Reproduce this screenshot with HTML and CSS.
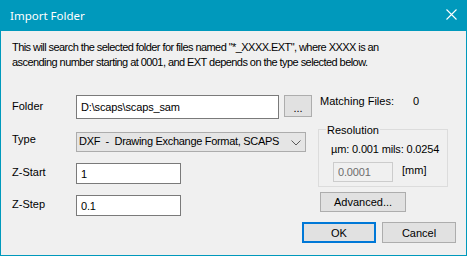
FILE: index.html
```html
<!DOCTYPE html>
<html lang="en">
<head>
  <meta charset="UTF-8" />
  <title>Import Folder</title>
  <link rel="stylesheet" href="styles.css">
</head>
<body>

  <div class="dialog">
    <div class="titlebar">
      <span class="title">Import Folder</span>
      <svg class="close" width="11" height="11" viewBox="0 0 11 11">
        <path d="M0.5 0.5L10.5 10.5M10.5 0.5L0.5 10.5" stroke="#fff" stroke-width="1.1" fill="none"/>
      </svg>
    </div>

    <div class="content">
      <p class="intro">This will search the selected folder for files named "*_XXXX.EXT", where XXXX is an<br>ascending number starting at 0001, and EXT depends on the type selected below.</p>

      <div class="main">
        <div class="fields">
          <div class="row row-folder">
            <label>Folder</label>
            <input class="text folder" type="text" value="D:\scaps\scaps_sam" />
            <button class="btn browse">...</button>
          </div>
          <div class="row row-type">
            <label>Type</label>
            <div class="combo">
              <span>DXF&nbsp; -&nbsp; Drawing Exchange Format, SCAPS</span>
              <svg class="chevron" width="10" height="6" viewBox="0 0 10 6">
                <path d="M0.5 0.5L5 5L9.5 0.5" stroke="#5a5a5a" stroke-width="1" fill="none"/>
              </svg>
            </div>
          </div>
          <div class="row row-z">
            <label>Z-Start</label>
            <input class="text short" type="text" value="1" />
          </div>
          <div class="row row-z">
            <label>Z-Step</label>
            <input class="text short" type="text" value="0.1" />
          </div>
        </div>

        <div class="side">
          <div class="matching">
            <span class="matching-label">Matching Files:</span>
            <span>0</span>
          </div>
          <fieldset class="resolution">
            <legend>Resolution</legend>
            <div class="units">µm: 0.001 mils: 0.0254</div>
            <div class="res-row">
              <input class="text res-value" type="text" value="0.0001" disabled />
              <span class="unit">[mm]</span>
            </div>
          </fieldset>
          <button class="btn advanced">Advanced...</button>
        </div>
      </div>

      <div class="actions">
        <button class="btn default">OK</button>
        <button class="btn">Cancel</button>
      </div>
    </div>
  </div>

</body>
</html>
```

FILE: styles.css
```css
* {
  box-sizing: border-box;
  margin: 0;
  padding: 0;
}

body {
  font-family: 'Liberation Sans', Arial, sans-serif;
  font-size: 11px;
  color: #000;
  background: #f0f0f0;
}

.dialog {
  width: 467px;
  height: 256px;
  background: #f0f0f0;
  border: 1px solid #0099bc;
  border-top: none;
}

.titlebar {
  height: 31px;
  background: #0099bc;
  display: flex;
  align-items: center;
  justify-content: space-between;
  padding: 0 9px 0 9px;
}

.title {
  font-family: 'Noto Sans', sans-serif;
  font-size: 11.5px;
  color: #fff;
  line-height: 16px;
  padding-top: 1px;
}

.close {
  display: block;
  margin-top: -2px;
}

.content {
  padding: 9px 10px 0 11px;
}

.intro {
  line-height: 15px;
  letter-spacing: -0.56px;
}

.main {
  display: flex;
  align-items: flex-start;
  margin-top: 24px;
}

/* left column */
.fields {
  width: 300px;
  padding-top: 1px;
}

.row {
  display: flex;
  align-items: flex-start;
}

.row label {
  width: 64px;
  flex-shrink: 0;
}

.row-folder label {
  line-height: 23px;
}

.row-type {
  margin-top: 13px;
}

.row-type label {
  line-height: 15px;
}

.row-z {
  margin-top: 11px;
}

.row-z label {
  line-height: 19px;
}

.text {
  font-family: 'Liberation Sans', Arial, sans-serif;
  font-size: 11px;
  color: #000;
  background: #fff;
  border: 1px solid #7a7a7a;
  padding: 0 4px;
  outline: none;
  letter-spacing: -0.15px;
}

.folder {
  width: 203px;
  height: 24px;
}

.short {
  width: 105px;
  height: 21px;
}

.btn {
  font-family: 'Liberation Sans', Arial, sans-serif;
  font-size: 11px;
  color: #000;
  background: #e1e1e1;
  border: 1px solid #adadad;
  cursor: pointer;
}

.browse {
  width: 28px;
  height: 22px;
  margin-left: 5px;
  padding-top: 3px;
}

.combo {
  width: 230px;
  height: 20px;
  background: #e5e5e5;
  border: 1px solid #acacac;
  display: flex;
  justify-content: space-between;
  padding: 1px 4px 0 2px;
  line-height: 14px;
  letter-spacing: -0.3px;
}

.chevron {
  display: block;
  margin-top: 6px;
}

/* right column */
.side {
  margin-left: 6px;
  width: 130px;
}

.matching {
  display: flex;
  line-height: 15px;
  padding-left: 2px;
}

.matching-label {
  width: 93px;
}

.resolution {
  margin-top: 12px;
  border: 1px solid #dcdcdc;
  padding: 0 0 4px 0;
}

.resolution legend {
  margin-left: 7px;
  padding: 2px 1px 0;
  line-height: 15px;
}

.units {
  line-height: 15px;
  padding-left: 12px;
  margin-top: 4px;
  letter-spacing: -0.15px;
}

.res-row {
  display: flex;
  align-items: flex-start;
  margin-top: 5px;
  padding-left: 14px;
}

.res-value {
  width: 60px;
  height: 20px;
  background: #f0f0f0;
  border-color: #cccccc;
  color: #6d6d6d;
}

.unit {
  margin-left: 9px;
  line-height: 17px;
}

.advanced {
  display: block;
  width: 86px;
  height: 20px;
  margin: 5px 0 0 2px;
}

.actions {
  display: flex;
  justify-content: flex-end;
  gap: 6px;
  margin-top: 6px;
}

.actions .btn {
  width: 74px;
  height: 21px;
}

.actions .default {
  border: 2px solid #0078d7;
}
```
